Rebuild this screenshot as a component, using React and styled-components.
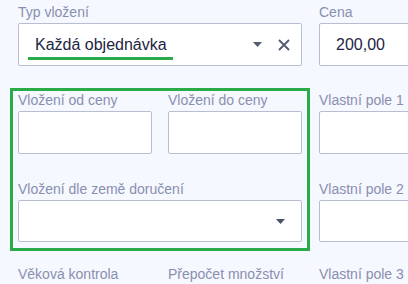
import React from "react";
import styled, { createGlobalStyle } from "styled-components";

const GlobalStyle = createGlobalStyle`
  html, body {
    margin: 0;
    padding: 0;
    background: #f5f8fe;
    font-family: "Liberation Sans", Arial, sans-serif;
    overflow: hidden;
  }
`;

const Page = styled.div`
  width: 408px;
  height: 284px;
  overflow: hidden;
  background: #f5f8fe;
`;

const Grid = styled.div`
  display: grid;
  grid-template-columns: 134px 134px 140px;
  grid-template-rows: 62px 62px 62px auto;
  column-gap: 16px;
  row-gap: 26px;
  padding: 4px 0 0 18px;
  width: 460px;
`;

const Field = styled.div`
  display: flex;
  flex-direction: column;
  gap: 3px;
  grid-column: ${(p) => p.span || "auto"};
  grid-row: ${(p) => p.row || "auto"};
  margin-top: ${(p) => p.shift || 0}px;
  margin-left: ${(p) => (p.span === "3" ? 1 : 0)}px;
  min-width: 0;
`;

const Label = styled.div`
  font-size: 14px;
  line-height: 16px;
  color: #8a8fb0;
  white-space: nowrap;
`;

const Input = styled.div`
  height: 43px;
  box-sizing: border-box;
  background: #fff;
  border: 1px solid #b8bed2;
  border-radius: 2px;
  display: flex;
  align-items: center;
  padding: 0 ${(p) => p.pr || 15}px 0 16px;
  font-size: 16px;
  color: #1d2542;
  width: ${(p) => (p.wide ? "180px" : "auto")};
`;

const Value = styled.span`
  white-space: nowrap;
  position: relative;
`;

const Spacer = styled.span`
  flex: 1;
`;

const Underline = styled.span`
  position: absolute;
  left: -7px;
  right: -6px;
  bottom: -6px;
  height: 3px;
  background: #2aab4a;
`;

const Controls = styled.div`
  display: flex;
  align-items: center;
  gap: 16px;
`;

const Highlight = styled.div`
  grid-column: 1 / 3;
  grid-row: 2 / 4;
  margin: -4px -8px -9px -8px;
  border: 3px solid #2aab4a;
  pointer-events: none;
  z-index: 1;
`;

const Caret = ({ color = "#555b6e" }) => (
  <svg width="9" height="5" viewBox="0 0 9 5">
    <path d="M0 0h9L4.5 5z" fill={color} />
  </svg>
);

const Cross = () => (
  <svg width="12" height="12" viewBox="0 0 12 12">
    <path d="M1 1l10 10M11 1L1 11" stroke="#555b6e" strokeWidth="1.8" />
  </svg>
);

export default function App() {
  return (
    <Page>
      <GlobalStyle />
      <Grid>
        <Field span="1 / 3" row="1">
          <Label>Typ vložení</Label>
          <Input pr={11}>
            <Value>
              Každá objednávka
              <Underline />
            </Value>
            <Spacer />
            <Controls>
              <Caret />
              <Cross />
            </Controls>
          </Input>
        </Field>
        <Field row="1" span="3">
          <Label>Cena</Label>
          <Input wide>200,00</Input>
        </Field>

        <Field row="2" span="1">
          <Label>Vložení od ceny</Label>
          <Input />
        </Field>
        <Field row="2" span="2">
          <Label>Vložení do ceny</Label>
          <Input />
        </Field>
        <Field row="2" span="3">
          <Label>Vlastní pole 1</Label>
          <Input wide />
        </Field>

        <Field span="1 / 3" row="3" shift={1}>
          <Label>Vložení dle země doručení</Label>
          <Input pr={16}>
            <Spacer />
            <Caret color="#4a5068" />
          </Input>
        </Field>
        <Field row="3" span="3" shift={1}>
          <Label>Vlastní pole 2</Label>
          <Input wide />
        </Field>

        <Highlight />

        <Field row="4" span="1" shift={-2}>
          <Label>Věková kontrola</Label>
        </Field>
        <Field row="4" span="2" shift={-2}>
          <Label>Přepočet množství</Label>
        </Field>
        <Field row="4" span="3" shift={-2}>
          <Label>Vlastní pole 3</Label>
        </Field>
      </Grid>
    </Page>
  );
}
